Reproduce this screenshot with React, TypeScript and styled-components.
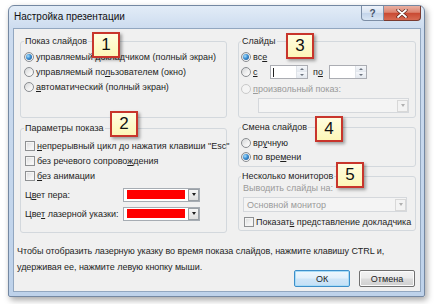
import React from "react";
import styled, { createGlobalStyle } from "styled-components";

const Global = createGlobalStyle`
  html, body { margin: 0; padding: 0; background: #ffffff; }
  body { font-family: "Liberation Sans", Arial, sans-serif; font-size: 9px; color: #1e1e1e; }
  * { box-sizing: border-box; }
`;

const Page = styled.div`
  position: relative;
  width: 434px;
  height: 304px;
  padding: 5px 0 0 8px;
  overflow: hidden;
`;

const Window = styled.div`
  width: 417px;
  height: 292px;
  border: 1px solid #7488a2;
  border-radius: 6px 6px 2px 2px;
  background: linear-gradient(#e2ecf7 0px, #cddcef 22px, #bed2ea 100%);
  box-shadow: 2px 3px 6px rgba(0, 0, 0, 0.35);
  display: flex;
  flex-direction: column;
`;

const TitleBar = styled.div`
  height: 22px;
  display: flex;
  align-items: flex-start;
  justify-content: space-between;
  padding-left: 5px;
`;

const Title = styled.div`
  font-size: 10px;
  line-height: 22px;
  color: #111;
`;

const CaptionButtons = styled.div`
  display: flex;
  margin-right: 3px;
`;

const CapButton = styled.div<{ $close?: boolean }>`
  width: ${(p) => (p.$close ? 37 : 23)}px;
  height: 15px;
  display: flex;
  align-items: center;
  justify-content: center;
  border: 1px solid ${(p) => (p.$close ? "#7a3a2f" : "#7c8ea6")};
  border-top: none;
  border-left-width: ${(p) => (p.$close ? 0 : 1)}px;
  border-radius: ${(p) => (p.$close ? "0 0 4px 0" : "0 0 0 4px")};
  background: ${(p) =>
    p.$close
      ? "linear-gradient(#eab0a2 0%, #dc8470 45%, #c94a33 52%, #d86b52 100%)"
      : "linear-gradient(#eef3fa 0%, #d6e2f1 48%, #c3d4ea 52%, #d8e5f4 100%)"};
  color: #45536a;
  font-size: 10px;
  font-weight: bold;
`;

const Client = styled.div`
  flex: 1;
  margin: 0 3px 4px 4px;
  background: #f0f0f0;
  border: 1px solid #92a7c0;
  padding: 6px 4px 4px 3px;
  display: flex;
  flex-direction: column;
`;

const Columns = styled.div`
  display: grid;
  grid-template-columns: 207px 178px;
  column-gap: 11px;
  margin-left: 3px;
  height: 198px;
`;

const Column = styled.div<{ $gap: number }>`
  display: flex;
  flex-direction: column;
  gap: ${(p) => p.$gap}px;
`;

const Group = styled.fieldset<{ $h: number; $pl?: number }>`
  margin: 0;
  height: ${(p) => p.$h}px;
  min-width: 0;
  padding: 0 4px 0 ${(p) => p.$pl ?? 3}px;
  border: 1px solid #d3d8dd;
  border-radius: 3px;
  display: flex;
  flex-direction: column;
`;

const Legend = styled.legend`
  padding: 0 1px;
  margin: 0;
  font-size: 9px;
  line-height: 12px;
  color: #1e1e1e;
`;

const Rows = styled.div<{ $top: number; $gap: number }>`
  display: flex;
  flex-direction: column;
  padding-top: ${(p) => p.$top}px;
  gap: ${(p) => p.$gap}px;
`;

const Option = styled.div<{ $disabled?: boolean; $indent?: number }>`
  display: flex;
  align-items: center;
  height: 14px;
  gap: 2px;
  padding-left: ${(p) => p.$indent ?? 0}px;
  white-space: nowrap;
  color: ${(p) => (p.$disabled ? "#9a9a9a" : "#1e1e1e")};
`;

const Radio = styled.span<{ $checked?: boolean; $disabled?: boolean }>`
  flex: none;
  width: 10px;
  height: 10px;
  border-radius: 50%;
  border: 1px solid ${(p) => (p.$disabled ? "#c9c9c9" : "#8a8d91")};
  background: ${(p) =>
    p.$disabled
      ? "#f4f4f4"
      : "linear-gradient(135deg, #d4d6d8 0%, #f2f2f2 60%, #ffffff 100%)"};
  display: flex;
  align-items: center;
  justify-content: center;
  &::after {
    content: "";
    display: ${(p) => (p.$checked ? "block" : "none")};
    width: 6px;
    height: 6px;
    border-radius: 50%;
    background: radial-gradient(circle at 35% 35%, #a8e0ff 0%, #3c8fd2 45%, #1a4c86 100%);
  }
`;

const Check = styled.span`
  flex: none;
  width: 10px;
  height: 10px;
  border: 1px solid #8e9092;
  background: linear-gradient(135deg, #d9dadb 0%, #f0f0f0 55%, #fdfdfd 100%);
  box-shadow: inset 0 0 0 1px #f4f4f4;
`;

const Key = styled.span`
  text-decoration: underline;
`;

const ColorRows = styled.div`
  display: flex;
  flex-direction: column;
  gap: 4px;
  margin-top: 4px;
`;

const ColorRow = styled.div`
  display: flex;
  align-items: center;
  height: 15px;
  padding-left: 1px;
`;

const ColorLabel = styled.span`
  width: 98px;
  white-space: nowrap;
`;

const ColorPicker = styled.div`
  width: 77px;
  height: 14px;
  border: 1px solid #a6acb3;
  background: #ffffff;
  display: flex;
  align-items: center;
  gap: 3px;
  padding: 0 0 0 3px;
`;

const Swatch = styled.span`
  width: 58px;
  height: 9px;
  background: #ff0000;
`;

const DropButton = styled.span<{ $disabled?: boolean }>`
  width: 11px;
  height: 12px;
  margin-left: auto;
  border: 1px solid ${(p) => (p.$disabled ? "#d8d8d8" : "#9aa0a6")};
  background: ${(p) =>
    p.$disabled ? "#f3f3f3" : "linear-gradient(#f6f6f6, #dedede)"};
  display: flex;
  align-items: center;
  justify-content: center;
  &::after {
    content: "";
    border-left: 2.5px solid transparent;
    border-right: 2.5px solid transparent;
    border-top: 3px solid ${(p) => (p.$disabled ? "#b0b0b0" : "#1e1e1e")};
  }
`;

const Combo = styled.div<{ $w: number; $ml: number; $mt: number }>`
  width: ${(p) => p.$w}px;
  height: 15px;
  margin: ${(p) => p.$mt}px 0 0 ${(p) => p.$ml}px;
  border: 1px solid #d5d8dc;
  background: #f4f4f4;
  display: flex;
  align-items: center;
  padding: 0 0 0 3px;
  color: #9a9a9a;
  white-space: nowrap;
`;

const SmallText = styled.div<{ $ml: number }>`
  margin-left: ${(p) => p.$ml}px;
  line-height: 12px;
  color: #9a9a9a;
`;

const Letter = styled.span<{ $w: number; $ml?: number }>`
  width: ${(p) => p.$w}px;
  margin-left: ${(p) => p.$ml ?? 0}px;
  flex: none;
`;

const Spin = styled.div<{ $ml: number }>`
  width: 38px;
  height: 14px;
  margin-left: ${(p) => p.$ml}px;
  border: 1px solid #abadb3;
  background: #ffffff;
  display: flex;
  align-items: stretch;
`;

const SpinField = styled.div`
  flex: 1;
  display: flex;
  align-items: center;
  padding-left: 2px;
`;

const Caret = styled.span`
  width: 1px;
  height: 9px;
  background: #222;
`;

const SpinArrows = styled.div`
  width: 11px;
  display: flex;
  flex-direction: column;
  border-left: 1px solid #dfe3e8;
`;

const SpinArrow = styled.span<{ $up?: boolean }>`
  flex: 1;
  display: flex;
  align-items: center;
  justify-content: center;
  background: linear-gradient(#f5f7fa, #e3e8ee);
  &::after {
    content: "";
    border-left: 2px solid transparent;
    border-right: 2px solid transparent;
    ${(p) => (p.$up ? "border-bottom" : "border-top")}: 2px solid #6d7480;
  }
`;

const Footer = styled.div`
  display: flex;
  flex-direction: column;
  margin-top: 10px;
`;

const Info = styled.p`
  margin: 0;
  line-height: 16px;
  letter-spacing: -0.05px;
  white-space: nowrap;
`;

const ButtonRow = styled.div`
  display: flex;
  justify-content: flex-end;
  gap: 9px;
  margin-top: -5px;
  padding-right: 1px;
`;

const Button = styled.div<{ $default?: boolean }>`
  width: 56px;
  height: 17px;
  display: flex;
  align-items: center;
  justify-content: center;
  border: 1px solid ${(p) => (p.$default ? "#3d8fca" : "#707070")};
  border-radius: 2px;
  background: ${(p) =>
    p.$default
      ? "linear-gradient(#eef7fd 0%, #e2f0fb 48%, #cfe6f8 52%, #c4e0f6 100%)"
      : "linear-gradient(#f3f3f3 0%, #ebebeb 48%, #dddddd 52%, #cfcfcf 100%)"};
  box-shadow: ${(p) => (p.$default ? "inset 0 0 0 1px #a9dcf7" : "inset 0 0 0 1px #fbfbfb")};
  color: #1e1e1e;
`;

const Badge = styled.div<{ $x: number; $y: number }>`
  position: absolute;
  left: ${(p) => p.$x}px;
  top: ${(p) => p.$y}px;
  width: 28px;
  height: 26px;
  border: 2px solid #c8352c;
  background: linear-gradient(#fffde0, #fdf7b8);
  box-shadow: 2px 2px 3px rgba(0, 0, 0, 0.35);
  display: flex;
  align-items: center;
  justify-content: center;
  font-family: "Liberation Sans", Arial, sans-serif;
  font-size: 17px;
  color: #111;
`;

export default function App() {
  return (
    <Page>
      <Global />
      <Window>
        <TitleBar>
          <Title>Настройка презентации</Title>
          <CaptionButtons>
            <CapButton>?</CapButton>
            <CapButton $close>
              <svg width="12" height="9" viewBox="0 0 12 9">
                <path d="M2 1 L10 8 M10 1 L2 8" stroke="#5a1f17" strokeWidth="3.2" strokeLinecap="round" />
                <path d="M2 1 L10 8 M10 1 L2 8" stroke="#ffffff" strokeWidth="1.8" strokeLinecap="round" />
              </svg>
            </CapButton>
          </CaptionButtons>
        </TitleBar>
        <Client>
          <Columns>
            <Column $gap={4}>
              <Group $h={83}>
                <Legend>Показ слайдов</Legend>
                <Rows $top={3} $gap={1}>
                  <Option>
                    <Radio $checked />
                    <span>управляемый <Key>д</Key>окладчиком (полный экран)</span>
                  </Option>
                  <Option>
                    <Radio />
                    <span>управляемый по<Key>л</Key>ьзователем (окно)</span>
                  </Option>
                  <Option>
                    <Radio />
                    <span><Key>а</Key>втоматический (полный экран)</span>
                  </Option>
                </Rows>
              </Group>
              <Group $h={111}>
                <Legend>Параметры показа</Legend>
                <Rows $top={5} $gap={1}>
                  <Option $indent={1}>
                    <Check />
                    <span><Key>н</Key>епрерывный цикл до нажатия клавиши "Esc"</span>
                  </Option>
                  <Option $indent={1}>
                    <Check />
                    <span>без речевого сопрово<Key>ж</Key>дения</span>
                  </Option>
                  <Option $indent={1}>
                    <Check />
                    <span><Key>б</Key>ез анимации</span>
                  </Option>
                </Rows>
                <ColorRows>
                  <ColorRow>
                    <ColorLabel>Ц<Key>в</Key>ет пера:</ColorLabel>
                    <ColorPicker>
                      <Swatch />
                      <DropButton />
                    </ColorPicker>
                  </ColorRow>
                  <ColorRow>
                    <ColorLabel>Цве<Key>т</Key> лазерной указки:</ColorLabel>
                    <ColorPicker>
                      <Swatch />
                      <DropButton />
                    </ColorPicker>
                  </ColorRow>
                </ColorRows>
              </Group>
            </Column>
            <Column $gap={3}>
              <Group $h={83} $pl={2}>
                <Legend>Слайды</Legend>
                <Rows $top={3} $gap={1}>
                  <Option>
                    <Radio $checked />
                    <span>вс<Key>е</Key></span>
                  </Option>
                  <Option>
                    <Radio />
                    <Letter $w={15}><Key>с</Key></Letter>
                    <Spin $ml={0}>
                      <SpinField><Caret /></SpinField>
                      <SpinArrows><SpinArrow $up /><SpinArrow /></SpinArrows>
                    </Spin>
                    <Letter $w={11} $ml={3}>п<Key>о</Key></Letter>
                    <Spin $ml={3}>
                      <SpinField />
                      <SpinArrows><SpinArrow $up /><SpinArrow /></SpinArrows>
                    </Spin>
                  </Option>
                </Rows>
                <Rows $top={3} $gap={0}>
                  <Option $disabled>
                    <Radio $disabled />
                    <span><Key>п</Key>роизвольный показ:</span>
                  </Option>
                </Rows>
                <Combo $w={151} $ml={17} $mt={2}>
                  <DropButton $disabled />
                </Combo>
              </Group>
              <Group $h={46} $pl={2}>
                <Legend>Смена слайдов</Legend>
                <Rows $top={3} $gap={0}>
                  <Option>
                    <Radio />
                    <span>вр<Key>у</Key>чную</span>
                  </Option>
                  <Option>
                    <Radio $checked />
                    <span>по вре<Key>м</Key>ени</span>
                  </Option>
                </Rows>
              </Group>
              <Group $h={61} $pl={2}>
                <Legend>Несколько мониторов</Legend>
                <SmallText $ml={2}>Выводить слайды на:</SmallText>
                <Combo $w={164} $ml={2} $mt={3}>
                  <span>Основной монитор</span>
                  <DropButton $disabled />
                </Combo>
                <Rows $top={3} $gap={0}>
                  <Option $indent={3}>
                    <Check />
                    <span>Показат<Key>ь</Key> представление докладчика</span>
                  </Option>
                </Rows>
              </Group>
            </Column>
          </Columns>
          <Footer>
            <Info>
              Чтобы отобразить лазерную указку во время показа слайдов, нажмите клавишу CTRL и,
              <br />
              удерживая ее, нажмите левую кнопку мыши.
            </Info>
            <ButtonRow>
              <Button $default>ОК</Button>
              <Button>Отмена</Button>
            </ButtonRow>
          </Footer>
        </Client>
      </Window>
      <Badge $x={92} $y={32}>1</Badge>
      <Badge $x={110} $y={111}>2</Badge>
      <Badge $x={286} $y={33}>3</Badge>
      <Badge $x={315} $y={116}>4</Badge>
      <Badge $x={336} $y={162}>5</Badge>
    </Page>
  );
}
